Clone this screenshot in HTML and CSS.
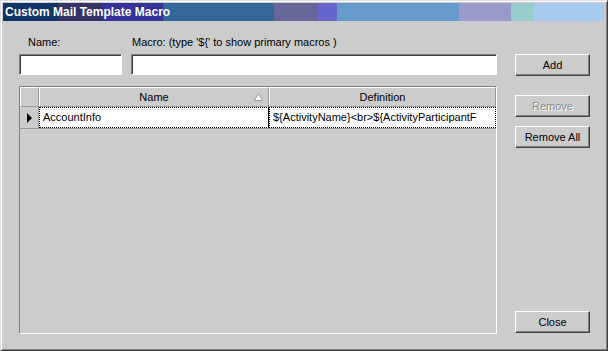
FILE: index.html
```html
<!DOCTYPE html>
<html lang="en">
<head>
  <meta charset="UTF-8" />
  <title>Custom Mail Template Macro</title>
  <link rel="stylesheet" href="styles.css">
</head>
<body>
  <div class="window">
    <div class="titlebar">Custom Mail Template Macro</div>
    <div class="content">
      <div class="main">
        <div class="fields">
          <div class="field name-field">
            <label class="lbl">Name:</label>
            <input type="text" class="txt" />
          </div>
          <div class="field macro-field">
            <label class="lbl">Macro: (type '${' to show primary macros )</label>
            <input type="text" class="txt" />
          </div>
        </div>

        <div class="grid">
          <div class="grid-head">
            <div class="hcell ind"></div>
            <div class="hcell col-name">Name
              <svg class="sort" width="9" height="8" viewBox="0 0 9 8">
                <path d="M4.5 0.5 L8.5 7.5 L0.5 7.5 Z" fill="#fff" stroke="#999" stroke-width="1"/>
              </svg>
            </div>
            <div class="hcell col-def">Definition</div>
          </div>
          <div class="grid-row">
            <div class="rcell ind"><span class="arrow"></span></div>
            <div class="rcell col-name cur">AccountInfo</div>
            <div class="rcell col-def cur">${ActivityName}&lt;br&gt;${ActivityParticipantF</div>
          </div>
        </div>
      </div>

      <div class="side">
        <button class="btn btn-add">Add</button>
        <button class="btn btn-remove" disabled>Remove</button>
        <button class="btn btn-all">Remove All</button>
        <button class="btn btn-close">Close</button>
      </div>
    </div>
  </div>
</body>
</html>
```

FILE: styles.css
```css
body {
  margin: 0;
  padding: 0;
  background: #cccccc;
  font-family: 'Liberation Sans', Arial, sans-serif;
  font-size: 11px;
  color: #000;
}

.window {
  width: 608px;
  height: 351px;
  box-sizing: border-box;
  padding: 2px 3px 2px 2px;
  background: #cccccc;
  border: 1px solid;
  border-color: #dfdfdf #404040 #404040 #dfdfdf;
  box-shadow: inset 1px 1px 0 #fff, inset -1px -1px 0 #808080;
  display: flex;
  flex-direction: column;
}

.titlebar {
  height: 18px;
  line-height: 18px;
  padding-left: 2px;
  color: #fff;
  font-weight: bold;
  font-size: 12px;
  background: linear-gradient(90deg,
    #0e3565 0 55px,
    #333366 55px 99px,
    #333399 99px 160px,
    #336699 160px 271px,
    #666699 271px 315px,
    #6666cc 315px 334px,
    #6699cc 334px 456px,
    #9999cc 456px 508px,
    #99cccc 508px 531px,
    #a6caf0 531px);
}

.content {
  flex: 1;
  display: flex;
  padding: 0 0 14px 16px;
}

.main {
  width: 478px;
  display: flex;
  flex-direction: column;
}

.fields {
  display: flex;
  gap: 9px;
  padding-top: 15px;
}

.field {
  display: flex;
  flex-direction: column;
}

.name-field { width: 103px; }
.name-field .lbl { padding-left: 9px; }
.macro-field { width: 368px; }
.macro-field .lbl { padding-left: 1px; }

.lbl {
  height: 13px;
  line-height: 13px;
  margin-bottom: 5px;
  white-space: nowrap;
}

.txt {
  height: 21px;
  box-sizing: border-box;
  margin: 0;
  padding: 0 3px;
  background: #fff;
  border: 1px solid;
  border-color: #808080 #fff #fff #808080;
  box-shadow: inset 1px 1px 0 #404040;
  font: inherit;
  outline: none;
}

.grid {
  flex: 1;
  margin-top: 11px;
  box-sizing: border-box;
  border: 1px solid;
  border-color: #808080 #fff #fff #808080;
}

.grid-head, .grid-row {
  display: flex;
}

.ind { width: 19px; flex: none; box-sizing: border-box; }
.col-name { width: 230px; flex: none; box-sizing: border-box; }
.col-def { flex: 1; box-sizing: border-box; }

.hcell {
  height: 20px;
  line-height: 18px;
  text-align: center;
  position: relative;
  border-top: 1px solid #fff;
  border-left: 1px solid #fff;
  border-right: 1px solid #999;
  border-bottom: 1px solid #999;
}

.sort {
  position: absolute;
  right: 5px;
  top: 5px;
}

.grid-row {
  height: 21px;
  border-bottom: 1px solid #999;
}

.rcell {
  height: 21px;
  line-height: 19px;
  white-space: nowrap;
  overflow: hidden;
}

.rcell.ind {
  border-right: 1px solid #999;
  position: relative;
}

.arrow {
  position: absolute;
  left: 7px;
  top: 6px;
  width: 0;
  height: 0;
  border-top: 5px solid transparent;
  border-bottom: 5px solid transparent;
  border-left: 5px solid #000;
}

.cur {
  background: #fff;
  border: 1px dotted #000;
  padding-left: 3px;
}

.col-name.cur { border-right: 1px solid #000; }

.side {
  display: flex;
  flex-direction: column;
  margin-left: 18px;
  padding-top: 33px;
}

.btn {
  width: 75px;
  height: 22px;
  margin: 0;
  padding: 0;
  background: #cccccc;
  font: inherit;
  color: #000;
  border: 1px solid;
  border-color: #fff #404040 #404040 #fff;
  box-shadow: inset -1px -1px 0 #808080;
}

.btn-remove {
  margin-top: 19px;
  color: #8a8a8a;
  text-shadow: 1px 1px 0 #fff;
}

.btn-all { margin-top: 9px; }

.btn-close {
  margin-top: auto;
  margin-bottom: 1px;
}
```
